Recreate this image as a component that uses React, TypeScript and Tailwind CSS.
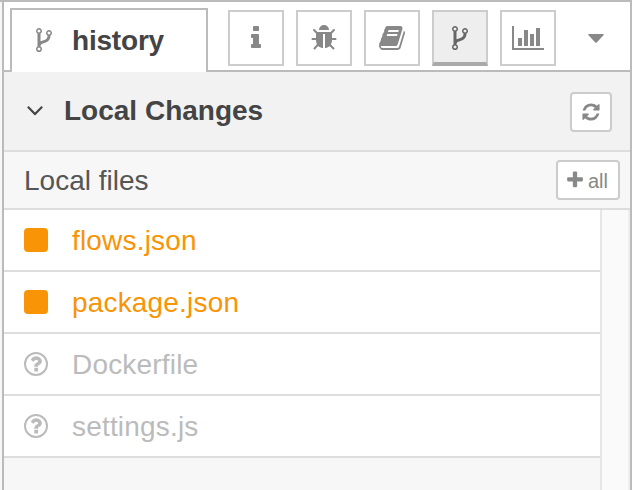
import React from "react";

const FORK =
  "M672 1472q0-40-28-68t-68-28-68 28-28 68 28 68 68 28 68-28 28-68zm0-1152q0-40-28-68t-68-28-68 28-28 68 28 68 68 28 68-28 28-68zm640 128q0-40-28-68t-68-28-68 28-28 68 28 68 68 28 68-28 28-68zm96 0q0 52-26 96.500t-70 69.500q-2 287-226 414-67 38-203 81-128 40-169.500 71t-41.500 100v26q44 25 70 69.500t26 96.500q0 80-56 136t-136 56-136-56-56-136q0-52 26-96.500t70-69.500v-820q-44-25-70-69.500t-26-96.500q0-80 56-136t136-56 136 56 56 136q0 52-26 96.500t-70 69.500v497q54-26 154-57 55-17 87.500-29.500t70.500-31 59-39.500 40.500-51 28-69.500 8.500-91.500q-44-25-70-69.500t-26-96.500q0-80 56-136t136-56 136 56 56 136z";
const INFO =
  "M1216 1344v128q0 26-19 45t-45 19h-512q-26 0-45-19t-19-45v-128q0-26 19-45t45-19h64v-384h-64q-26 0-45-19t-19-45v-128q0-26 19-45t45-19h384q26 0 45 19t19 45v576h64q26 0 45 19t19 45zm-128-1152v192q0 26-19 45t-45 19h-256q-26 0-45-19t-19-45v-192q0-26 19-45t45-19h256q26 0 45 19t19 45z";
const BUG =
  "M1696 960q0 26-19 45t-45 19h-224q0 171-67 290l208 209q19 19 19 45t-19 45q-18 19-45 19t-45-19l-198-197q-5 5-15 13t-42 28.500-65 36.500-82 29-97 13v-896h-128v896q-51 0-101.500-13.500t-87-33-66-39-43.500-32.500l-15-14-183 207q-20 21-48 21-24 0-43-16-19-18-20.500-44.500t15.500-46.500l202-227q-58-114-58-274h-224q-26 0-45-19t-19-45 19-45 45-19h224v-294l-173-173q-19-19-19-45t19-45 45-19 45 19l173 173h844l173-173q19-19 45-19t45 19 19 45-19 45l-173 173v294h224q26 0 45 19t19 45zm-480-576h-640q0-133 93.500-226.500t226.500-93.500 226.500 93.500 93.500 226.500z";
const BOOK =
  "M1703 478q40 57 18 129l-275 906q-19 64-76.500 107.500t-122.500 43.500h-923q-77 0-148.500-53.500t-99.500-131.500q-24-67-2-127 0-4 3-27t4-37q1-8-3-21.500t-3-19.500q2-11 8-21t16.500-23.500 16.500-23.500q23-38 45-91.500t30-91.500q3-10 .5-30t-.5-28q3-11 17-28t17-23q21-36 42-92t25-90q1-9-2.500-32t.5-28q4-13 22-30.500t22-22.500q19-26 42.500-84.500t27.500-96.500q1-8-3-25.500t-2-26.500q2-8 9-18t18-23 17-21q8-12 16.500-30.500t15-35 16-36 19.500-32 26.500-23.500 36-11.500 47.500 5.500l-1 3q38-9 51-9h761q74 0 114 56t18 130l-274 906q-36 119-71.500 153.500t-128.500 34.500h-869q-27 0-38 15-11 16-1 43 24 70 144 70h923q29 0 56-15.500t35-41.500l300-987q7-22 5-57 38 15 59 43zm-1064 2q-4 13 2 22.500t20 9.500h608q13 0 25.500-9.500t16.500-22.500l21-64q4-13-2-22.500t-20-9.500h-608q-13 0-25.500 9.500t-16.500 22.500zm-83 256q-4 13 2 22.500t20 9.500h608q13 0 25.500-9.500t16.500-22.500l21-64q4-13-2-22.500t-20-9.500h-608q-13 0-25.500 9.500t-16.500 22.500z";
const REFRESH =
  "M1639 1056q0 5-1 7-64 268-268 434.500t-478 166.500q-146 0-282.500-55t-243.500-157l-129 129q-19 19-45 19t-45-19-19-45v-448q0-26 19-45t45-19h448q26 0 45 19t19 45-19 45l-137 137q71 66 161 102t187 36q134 0 250-65t186-179q11-17 53-117 8-23 30-23h192q13 0 22.500 9.500t9.500 22.500zm25-800v448q0 26-19 45t-45 19h-448q-26 0-45-19t-19-45 19-45l138-138q-148-137-349-137-134 0-250 65t-186 179q-11 17-53 117-8 23-30 23h-199q-13 0-22.500-9.500t-9.500-22.500v-7q65-268 270-434.500t480-166.500q146 0 284 55.500t245 156.500l130-129q19-19 45-19t45 19 19 45z";
const PLUS =
  "M1600 736v192q0 40-28 68t-68 28h-416v416q0 40-28 68t-68 28h-192q-40 0-68-28t-28-68v-416h-416q-40 0-68-28t-28-68v-192q0-40 28-68t68-28h416v-416q0-40 28-68t68-28h192q40 0 68 28t28 68v416h416q40 0 68 28t28 68z";
const ANGLE_DOWN =
  "M1395 736q0 13-10 23l-466 466q-10 10-23 10t-23-10l-466-466q-10-10-10-23t10-23l50-50q10-10 23-10t23 10l393 393 393-393q10-10 23-10t23 10l50 50q10 10 10 23z";
const QUESTION =
  "M1024 1376v-192q0-14-9-23t-23-9h-192q-14 0-23 9t-9 23v192q0 14 9 23t23 9h192q14 0 23-9t9-23zm256-672q0-88-55.500-163t-138.500-116-170-41q-243 0-371 213-15 24 8 42l132 100q7 6 19 6 16 0 25-12 53-68 86-92 34-24 86-24 48 0 85.500 26t37.500 59q0 38-20 61t-68 45q-63 28-115.500 86.500t-52.500 125.500v36q0 14 9 23t23 9h192q14 0 23-9t9-23q0-19 21.500-49.500t54.500-49.500q32-18 49-28.500t46-35 44.500-48 28-60.500 12.500-81z";

function Glyph({ d, className = "size-7" }: { d: string; className?: string }) {
  return (
    <svg viewBox="0 0 1792 1792" fill="currentColor" className={`block shrink-0 ${className}`}>
      <path d={d} />
    </svg>
  );
}

function ChartGlyph() {
  return (
    <svg viewBox="0 0 32 24" fill="currentColor" className="block h-6 w-8 shrink-0" shapeRendering="crispEdges">
      <path d="M0 0h2v22h30v2H0zM6 12h4v8H6zM12 4h4v16h-4zM18 8h4v12h-4zM24 2h4v18h-4z" />
    </svg>
  );
}

function UntrackedGlyph() {
  return (
    <svg viewBox="0 0 1536 1536" fill="currentColor" className="block size-6 shrink-0">
      <circle cx="768" cy="768" r="704" fill="none" stroke="currentColor" strokeWidth="128" />
      <path d={QUESTION} transform="translate(-72 -88) scale(.95)" />
    </svg>
  );
}

function TabButton({ active = false, children }: { active?: boolean; children: React.ReactNode }) {
  return (
    <button
      className={`flex size-14 items-center justify-center border-2 border-[#ccc] ${
        active ? "border-b-4 border-b-[#aaa] bg-[#eee] pt-0.5 text-[#666]" : "bg-white text-[#888]"
      }`}
    >
      {children}
    </button>
  );
}

const files = [
  { name: "flows.json", modified: true },
  { name: "package.json", modified: true },
  { name: "Dockerfile", modified: false },
  { name: "settings.js", modified: false },
];

export default function App() {
  return (
    <div className="flex h-[490px] w-[632px] flex-col overflow-hidden border-t-2 border-r-2 border-[#bbb] bg-[#f7f7f7] pl-0.5 font-['Liberation_Sans',Arial,sans-serif] text-[28px] leading-8 text-[#555]">
      <div className="flex min-h-0 grow flex-col border-l-2 border-[#bbb]">
        <header className="flex h-[70px] shrink-0 bg-white">
          <div className="w-[7px] rounded-br-[2px] border-b-2 border-[#bbb]" />
          <div className="-ml-px mt-1.5 flex w-[198px] items-center border-x-2 border-t-2 border-[#bbb] pb-0.5 pl-[18px] font-bold text-[#444]">
            <Glyph d={FORK} className="size-7 text-[#888]" />
            <span className="ml-3.5 pt-0.5 tracking-[-0.2px]">history</span>
          </div>
          <div className="-ml-px flex grow items-start gap-3 border-b-2 border-[#bbb] pt-2 pl-[21px]">
            <TabButton><Glyph d={INFO} /></TabButton>
            <TabButton><Glyph d={BUG} /></TabButton>
            <TabButton><Glyph d={BOOK} /></TabButton>
            <TabButton active><Glyph d={FORK} /></TabButton>
            <TabButton><ChartGlyph /></TabButton>
            <button className="flex h-14 w-14 items-center justify-center text-[#888]">
              <svg viewBox="0 0 16 9" fill="currentColor" className="mt-px block h-[9px] w-4">
                <path d="M1 0h14q1 0 .7 1L8.700 8.500q-.7.700-1.400 0L.3 1Q0 0 1 0z" />
              </svg>
            </button>
          </div>
        </header>

        <div className="flex h-20 shrink-0 items-center border-b-2 border-[#ddd] bg-[#f2f2f2] pr-[18px] pl-[17px] font-bold text-[#444]">
          <Glyph d={ANGLE_DOWN} className="mb-0.5 size-7" />
          <span className="ml-[15px] grow">Local Changes</span>
          <button className="mt-0.5 flex h-10 w-[42px] items-center justify-center rounded-sm border-2 border-[#ccc] bg-white text-[#888]">
            <Glyph d={REFRESH} className="size-5" />
          </button>
        </div>

        <div className="flex h-[58px] shrink-0 items-center border-b-2 border-[#ddd] bg-[#f7f7f7] pr-2.5 pl-5">
          <span className="grow pt-0.5">Local files</span>
          <button className="flex h-10 w-16 items-center rounded-sm border-2 border-[#ccc] bg-white pl-[7px] text-xl leading-6 text-[#888]">
            <Glyph d={PLUS} className="size-5" />
            <span className="ml-[3px] pt-0.5">all</span>
          </button>
        </div>

        <div className="flex min-h-0 grow bg-[#f7f7f7]">
          <ul className="w-[596px]">
            {files.map((file) => (
              <li
                key={file.name}
                className={`flex h-[62px] items-center border-b-2 border-[#ddd] bg-white pl-5 ${
                  file.modified ? "text-[#f89406]" : "text-[#bbb]"
                }`}
              >
                {file.modified ? <span className="size-6 rounded bg-[#f89406]" /> : <UntrackedGlyph />}
                <span className="ml-6 pt-0.5 tracking-[0.18px]">{file.name}</span>
              </li>
            ))}
          </ul>
          <div className="grow border-x-2 border-l-[#e6e6e6] border-r-[#eee] bg-[#fafafa]" />
        </div>
      </div>
    </div>
  );
}
